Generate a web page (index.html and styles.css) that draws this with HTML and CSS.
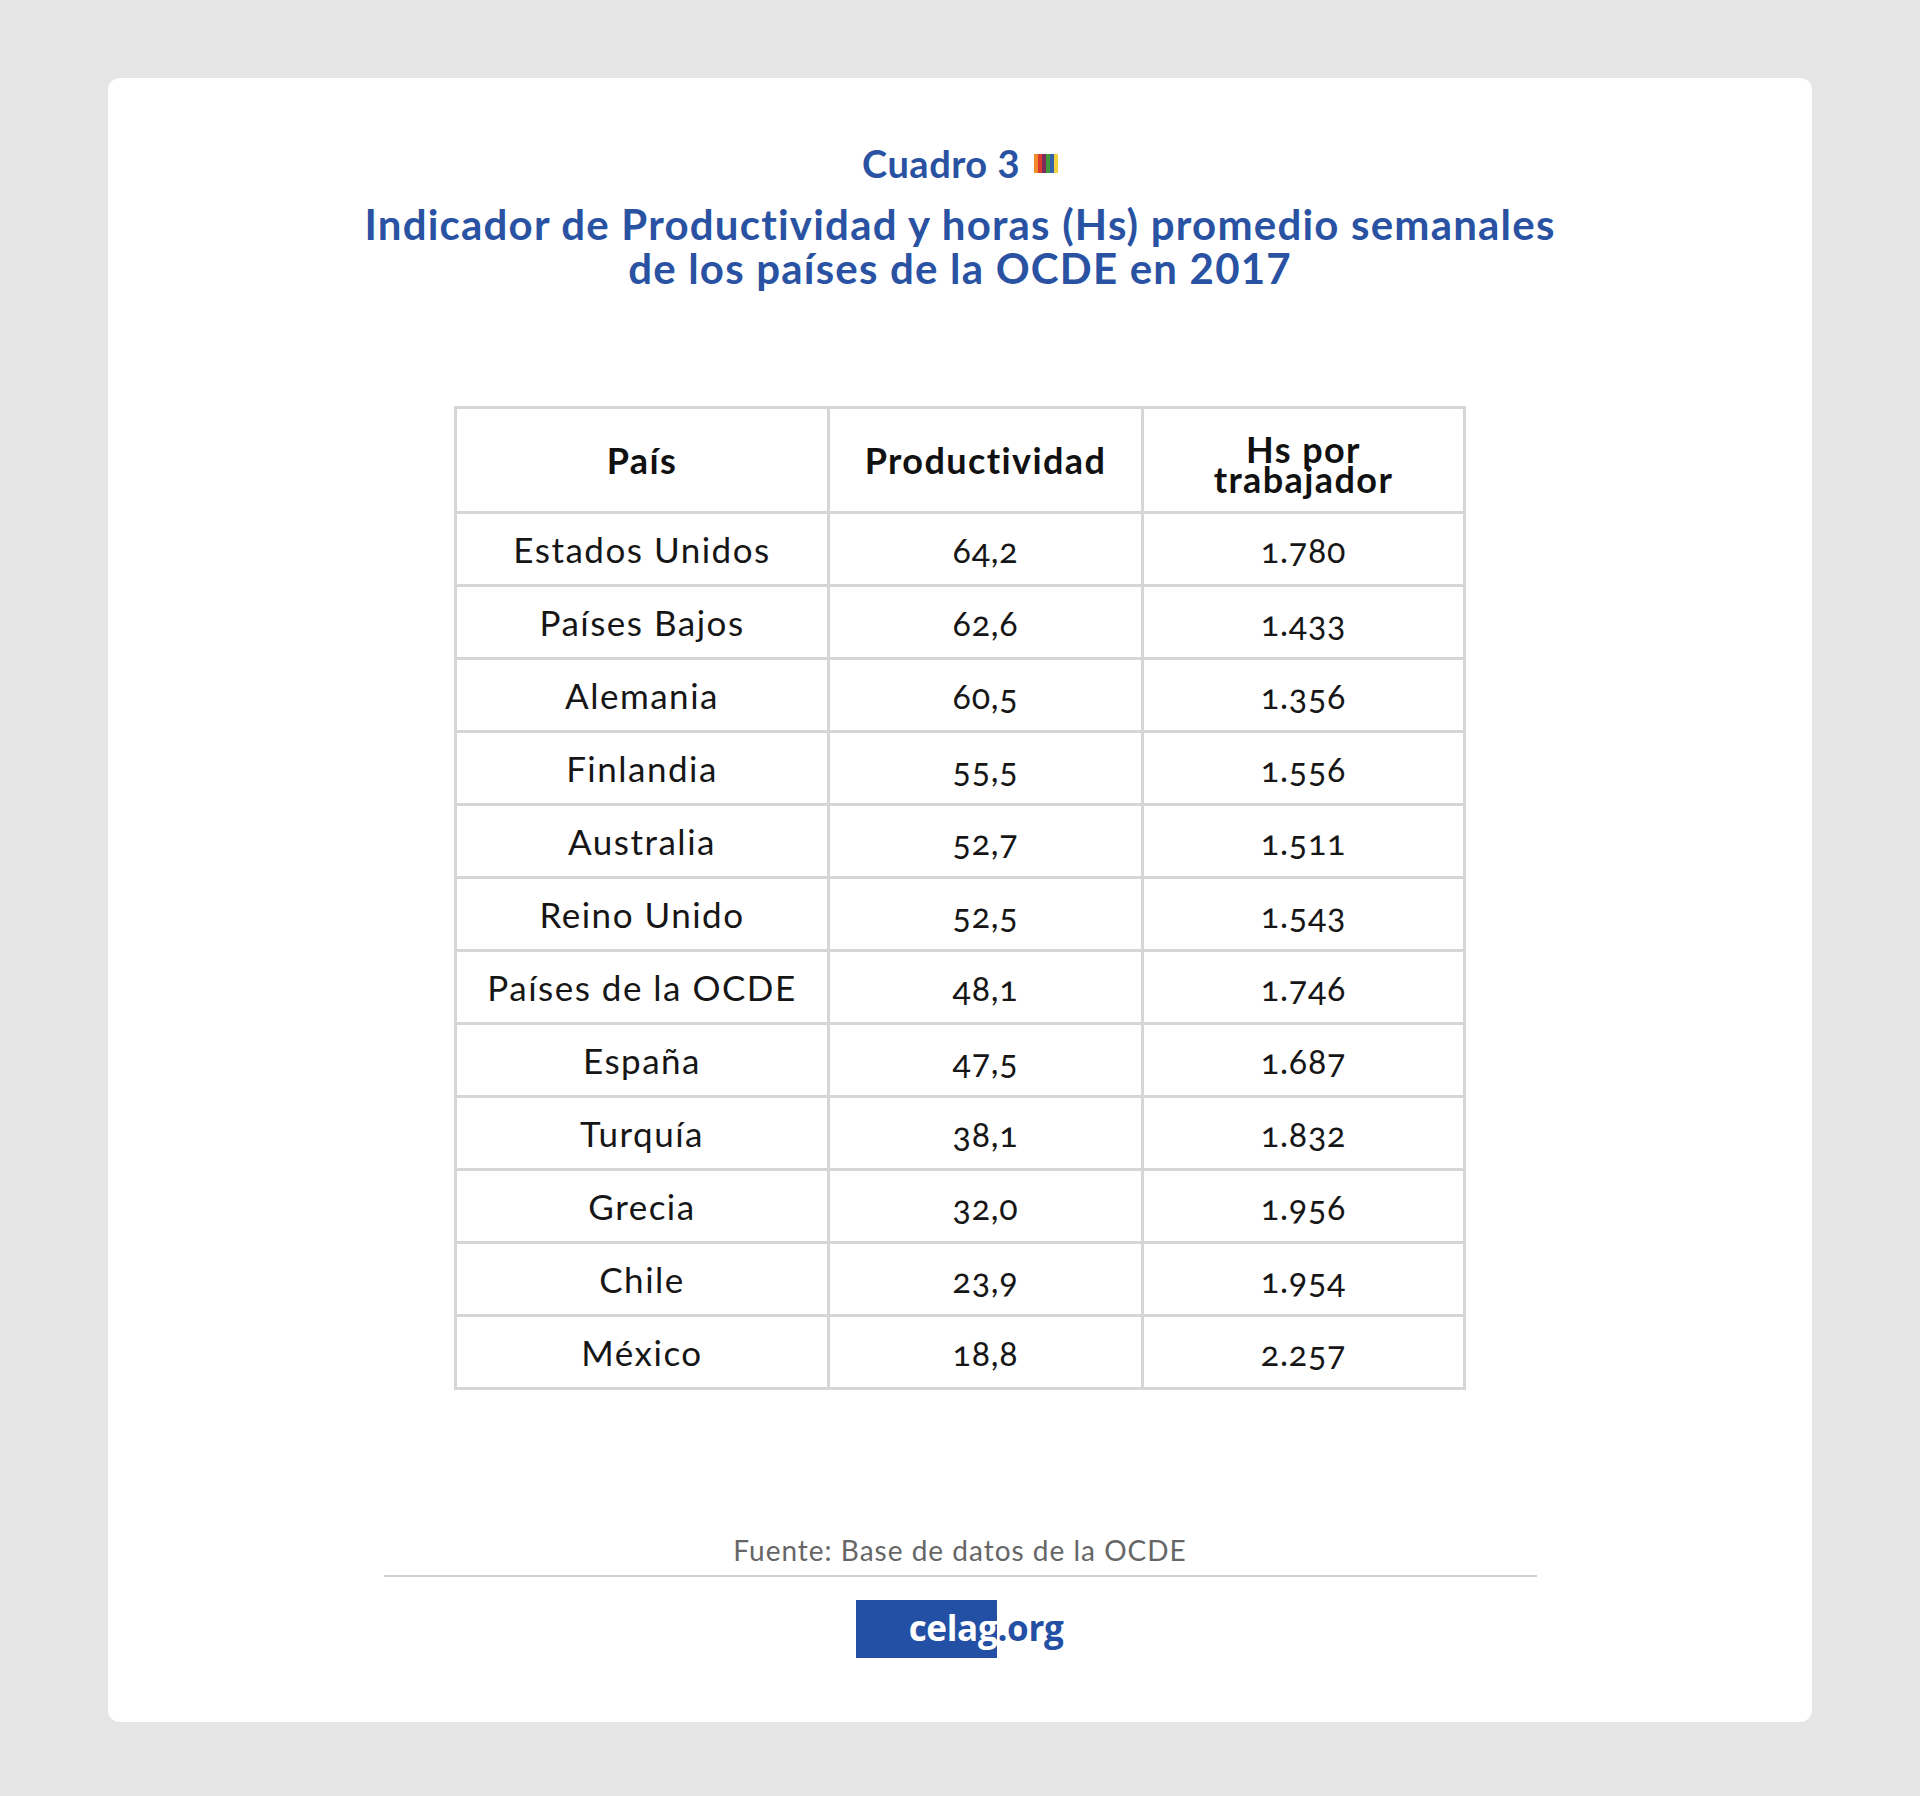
FILE: index.html
```html
<!DOCTYPE html>
<html lang="es">
<head>
<meta charset="utf-8">
<title>Cuadro 3 - Productividad OCDE 2017</title>
<link rel="stylesheet" href="styles.css">
</head>
<body>
<main class="card">
  <h2 class="kicker">Cuadro 3
    <svg class="stripes" width="24" height="19" viewBox="0 0 24 19" aria-hidden="true">
      <rect x="0" y="0" width="4" height="19" fill="#f08a2a"/>
      <rect x="4" y="0" width="4" height="19" fill="#dc3a2c"/>
      <rect x="8" y="0" width="4" height="19" fill="#7d2b5c"/>
      <rect x="12" y="0" width="4" height="19" fill="#3e9a3c"/>
      <rect x="16" y="0" width="4" height="19" fill="#3563ab"/>
      <rect x="20" y="0" width="4" height="19" fill="#f2d23a"/>
    </svg>
  </h2>
  <h1 class="title">Indicador de Productividad y horas (Hs) promedio semanales<br>de los países de la OCDE en 2017</h1>

  <table class="data">
    <colgroup>
      <col class="c1"><col class="c2"><col class="c3">
    </colgroup>
    <thead>
      <tr><th>País</th><th>Productividad</th><th class="two"><span class="l">Hs por</span><span class="l">trabajador</span></th></tr>
    </thead>
    <tbody>
      <tr><td>Estados Unidos</td><td>64,2</td><td>1.780</td></tr>
      <tr><td>Países Bajos</td><td>62,6</td><td>1.433</td></tr>
      <tr><td>Alemania</td><td>60,5</td><td>1.356</td></tr>
      <tr><td>Finlandia</td><td>55,5</td><td>1.556</td></tr>
      <tr><td>Australia</td><td>52,7</td><td>1.511</td></tr>
      <tr><td>Reino Unido</td><td>52,5</td><td>1.543</td></tr>
      <tr><td>Países de la OCDE</td><td>48,1</td><td>1.746</td></tr>
      <tr><td>España</td><td>47,5</td><td>1.687</td></tr>
      <tr><td>Turquía</td><td>38,1</td><td>1.832</td></tr>
      <tr><td>Grecia</td><td>32,0</td><td>1.956</td></tr>
      <tr><td>Chile</td><td>23,9</td><td>1.954</td></tr>
      <tr><td>México</td><td>18,8</td><td>2.257</td></tr>
    </tbody>
  </table>

  <p class="source">Fuente: Base de datos de la OCDE</p>
  <hr class="rule">
  <div class="logo"><span class="logo-box">celag</span><span class="logo-tld">.org</span></div>
</main>
</body>
</html>
```

FILE: styles.css
```css
html, body {
  margin: 0;
  padding: 0;
}

body {
  background: #e6e6e6;
  height: 1796px;
  font-family: Lato, "Open Sans", "DejaVu Sans", sans-serif;
  color: #141414;
}

.card {
  box-sizing: border-box;
  margin: 78px 108px 0;
  height: 1644px;
  background: #ffffff;
  border-radius: 12px;
  display: flex;
  flex-direction: column;
  align-items: center;
}

.kicker {
  margin: 63px 0 0;
  font-size: 38px;
  line-height: 44px;
  font-weight: 700;
  letter-spacing: 0.5px;
  color: #2a52a3;
  display: flex;
  align-items: center;
  gap: 14px;
}

.stripes {
  display: block;
}

.title {
  margin: 17px 0 0;
  font-size: 42px;
  line-height: 44px;
  font-weight: 700;
  letter-spacing: 1.2px;
  color: #2a52a3;
  text-align: center;
}

.data {
  margin-top: 116px;
  border-collapse: collapse;
  border: 3px solid #d6d6d6;
  table-layout: fixed;
  width: 1009px;
}

.c1 { width: 373px; }
.c2 { width: 314px; }
.c3 { width: 322px; }

.data th,
.data td {
  border: 3px solid #d6d6d6;
  text-align: center;
  padding: 0;
}

.data th {
  height: 102px;
  font-size: 36px;
  font-weight: 700;
  letter-spacing: 1.4px;
  color: #111;
}

.data th.two {
  padding-top: 8px;
  height: 94px;
}

.data th .l {
  display: block;
  line-height: 30px;
}

.data td {
  height: 70px;
  font-size: 34px;
  letter-spacing: 0.8px;
  color: #161616;
  font-variant-numeric: oldstyle-nums;
}

.data td:first-child {
  font-size: 35px;
  letter-spacing: 1.5px;
}

.source {
  margin: 142px 0 0;
  font-size: 28px;
  line-height: 36px;
  color: #666;
  letter-spacing: 1px;
}

.rule {
  margin: 7px 0 0;
  width: 1153px;
  height: 2px;
  border: 0;
  background: #cfcfcf;
}

.logo {
  margin-top: 23px;
  display: flex;
  align-items: center;
  font-family: "Open Sans", Lato, sans-serif;
  font-weight: 700;
  font-size: 35px;
  letter-spacing: -0.3px;
}

.logo-box {
  box-sizing: border-box;
  width: 141px;
  height: 58px;
  background: #2350a4;
  color: #fff;
  display: flex;
  align-items: center;
  justify-content: flex-end;
  padding-bottom: 4px;
}

.logo-tld {
  color: #2350a4;
  padding-bottom: 4px;
}
```
